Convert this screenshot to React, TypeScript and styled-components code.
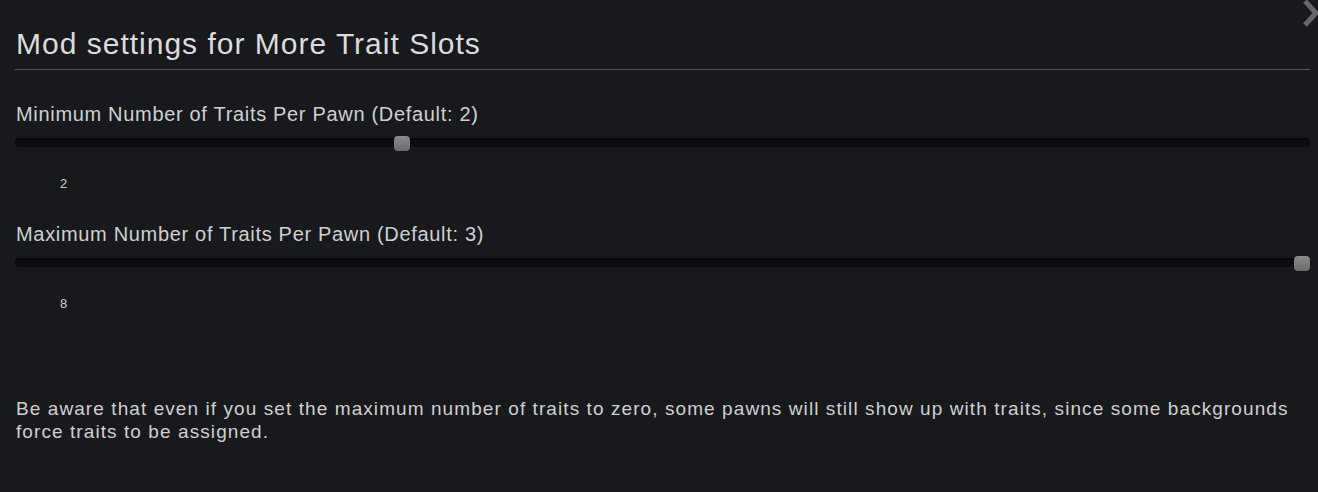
import React from 'react';
import styled, { createGlobalStyle } from 'styled-components';

const GlobalStyle = createGlobalStyle`
  html, body {
    margin: 0;
    padding: 0;
    background: #17191d;
  }
  body {
    font-family: 'Liberation Sans', Arial, sans-serif;
    color: #d6d6d6;
  }
`;

const Window = styled.div`
  position: relative;
  width: 1318px;
  height: 492px;
  overflow: hidden;
  background: #17191d;
  box-sizing: border-box;
  padding: 26px 8px 0 15px;
`;

const CloseArrow = styled.svg`
  position: absolute;
  top: -2px;
  right: -4px;
`;

const Title = styled.h1`
  margin: 0;
  padding: 0 0 7px 1px;
  font-size: 30px;
  font-weight: normal;
  letter-spacing: 1px;
  line-height: 36px;
  color: #dcdcdc;
  border-bottom: 1px solid #55575b;
`;

const Setting = styled.section`
  display: flex;
  flex-direction: column;
  margin-top: 32px;
  & + & {
    margin-top: 30px;
  }
`;

const Label = styled.div`
  padding-left: 1px;
  font-size: 20px;
  letter-spacing: 0.68px;
  line-height: 24px;
  color: #d0d0d0;
`;

const Track = styled.div`
  position: relative;
  margin-top: 12px;
  height: 9px;
  border-radius: 5px;
  background: #0c0d0f;
  box-shadow: inset 0 1px 2px rgba(0, 0, 0, 0.6);
`;

const Thumb = styled.div`
  position: absolute;
  top: -2px;
  width: 16px;
  height: 15px;
  margin-left: -8px;
  border-radius: 4px;
  background: linear-gradient(#8a8a8a, #6c6c6c);
  box-shadow: 0 0 1px rgba(0, 0, 0, 0.8);
`;

const Value = styled.div`
  margin-top: 29px;
  padding-left: 45px;
  font-size: 13px;
  letter-spacing: 0.5px;
  line-height: 16px;
  color: #cfcfcf;
`;

const Note = styled.p`
  margin: 85px 0 0 1px;
  font-size: 19px;
  letter-spacing: 1.08px;
  line-height: 23px;
  color: #d0d0d0;
`;

type SliderProps = { label: string; value: number; position: number };

const SliderSetting = ({ label, value, position }: SliderProps) => (
  <Setting>
    <Label>{label}</Label>
    <Track>
      <Thumb style={{ left: `calc(${position * 100}% + ${8 - position * 16}px)` }} />
    </Track>
    <Value>{value}</Value>
  </Setting>
);

export default function App() {
  return (
    <Window>
      <GlobalStyle />
      <CloseArrow width="20" height="32" viewBox="0 0 20 32">
        <path d="M3 3 L14 15 L3 27" fill="none" stroke="#66686b" strokeWidth="5" />
      </CloseArrow>
      <Title>Mod settings for More Trait Slots</Title>
      <SliderSetting label="Minimum Number of Traits Per Pawn (Default: 2)" value={2} position={0.296} />
      <SliderSetting label="Maximum Number of Traits Per Pawn (Default: 3)" value={8} position={1} />
      <Note>
        Be aware that even if you set the maximum number of traits to zero, some pawns will still show up with traits, since some backgrounds force traits to be assigned.
      </Note>
    </Window>
  );
}
